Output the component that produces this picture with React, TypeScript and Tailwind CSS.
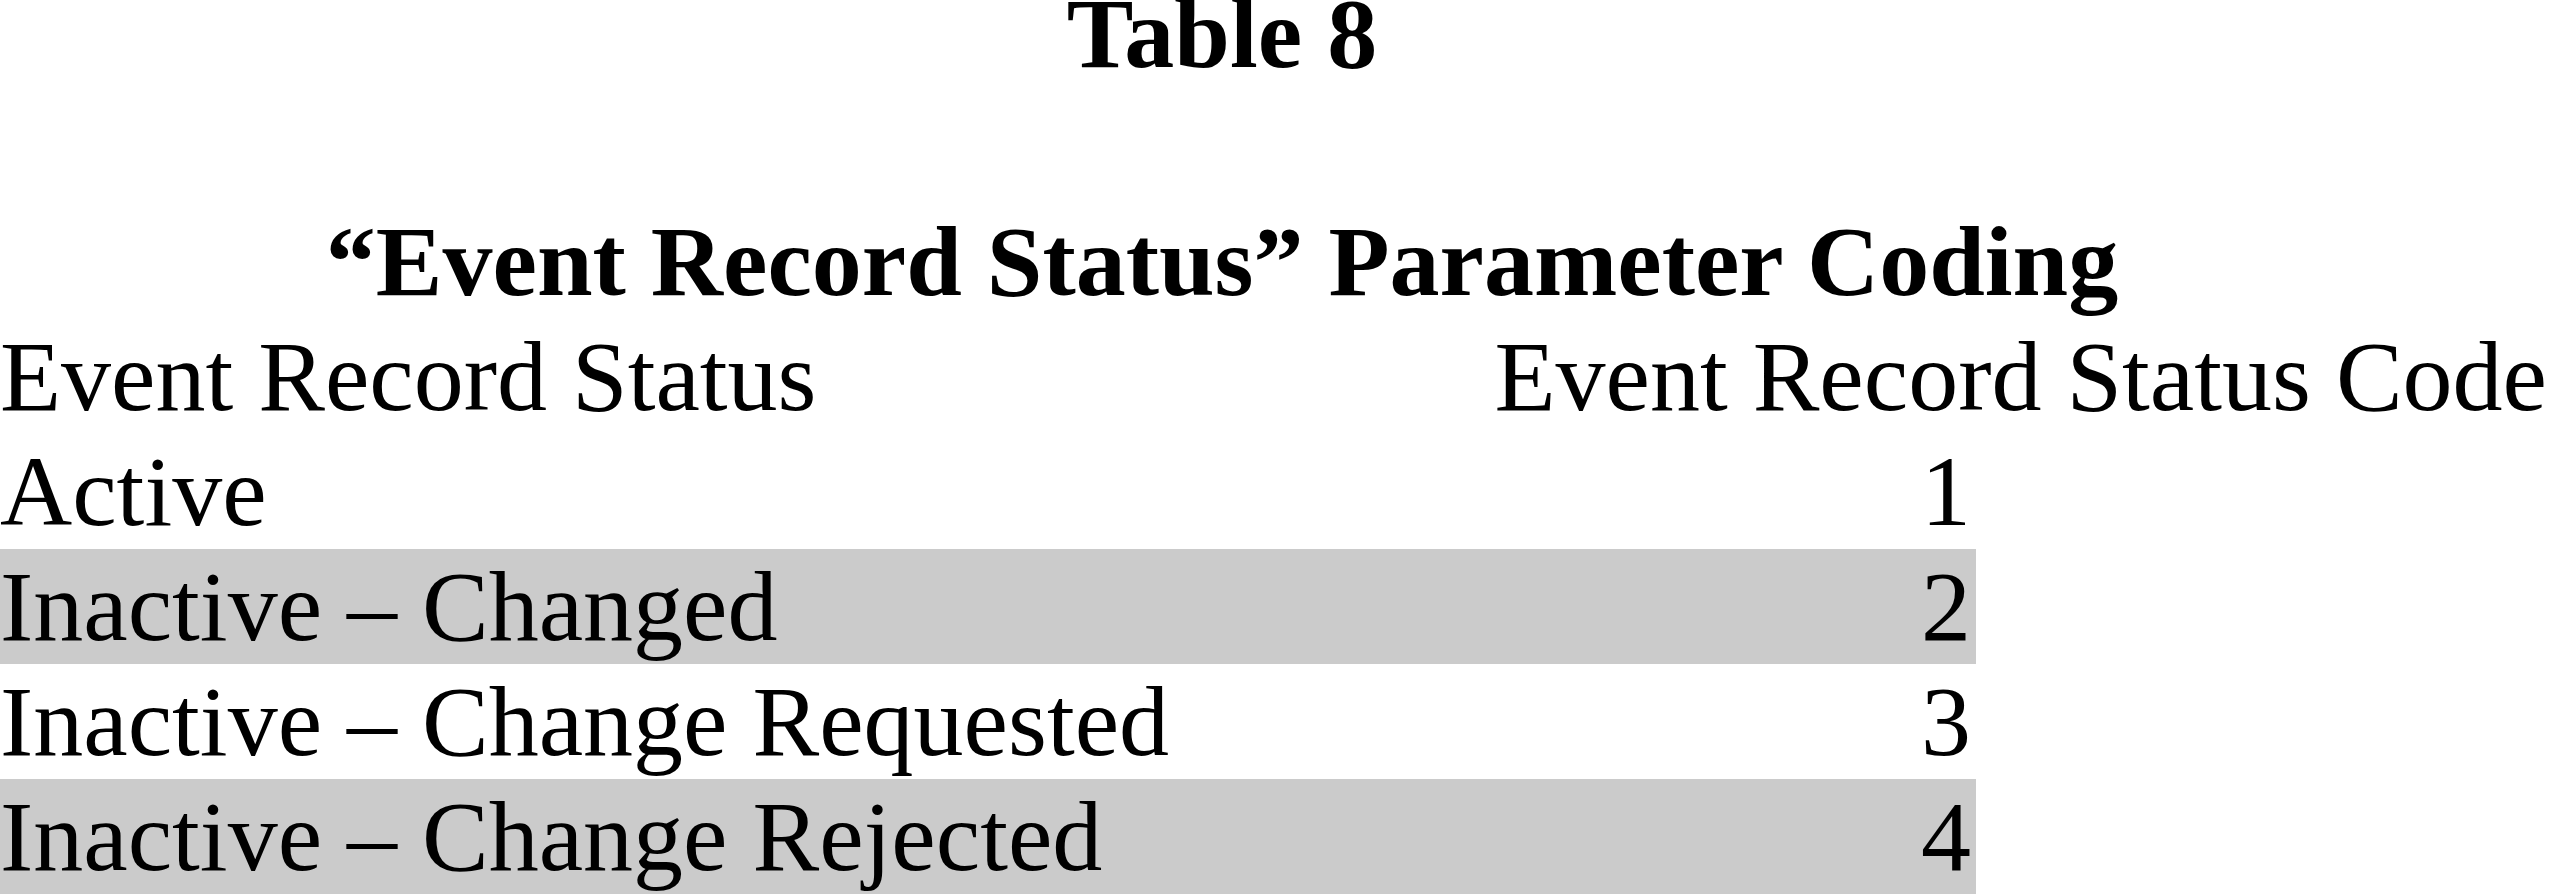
const rows = [
  { label: "Active", code: "1", shaded: false },
  { label: "Inactive – Changed", code: "2", shaded: true },
  { label: "Inactive – Change Requested", code: "3", shaded: false },
  { label: "Inactive – Change Rejected", code: "4", shaded: true },
];

export default function App() {
  return (
    <div className="w-[2550px] h-[895px] overflow-hidden bg-white text-black font-['Liberation_Serif','Times_New_Roman',serif] text-[100px] leading-[115px]">
      {/* headings */}
      <div className="w-[2444px] text-center font-bold leading-[68px]">Table 8</div>
      <div className="w-[2444px] text-center font-bold mt-[136px]">
        “Event Record Status” Parameter Coding
      </div>

      {/* column headers */}
      <div className="flex justify-between w-[2547px]">
        <span>Event Record Status</span>
        <span>Event Record Status Code</span>
      </div>

      {/* rows */}
      {rows.map((row) => (
        <div
          key={row.code}
          className={
            row.shaded
              ? "flex justify-between w-[1976px] h-[115px] pr-[5px] bg-[#cbcbcb]"
              : "flex justify-between w-[1976px] h-[115px] pr-[5px]"
          }
        >
          <span>{row.label}</span>
          <span>{row.code}</span>
        </div>
      ))}
    </div>
  );
}
